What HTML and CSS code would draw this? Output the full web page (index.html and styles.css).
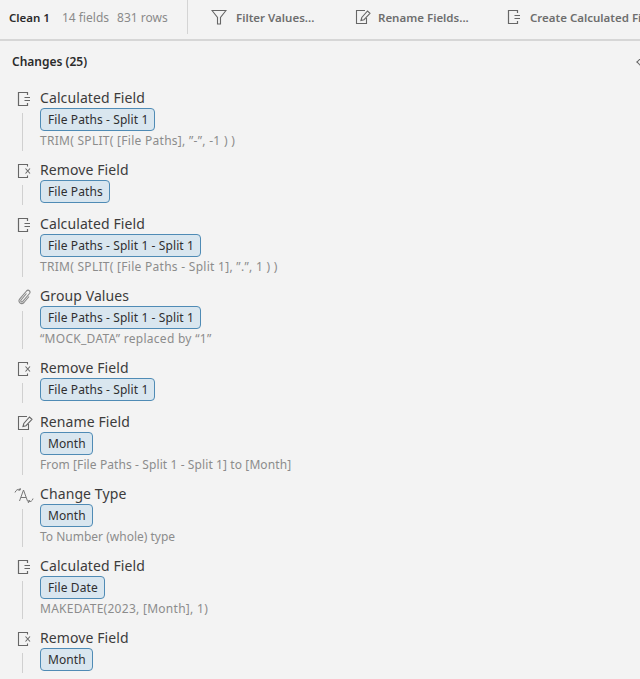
FILE: index.html
```html
<!DOCTYPE html>
<html lang="en">
<head>
    <meta charset="UTF-8">
    <title>Clean 1</title>
    <link rel="stylesheet" href="styles.css">
</head>
<body>

<svg class="defs" width="0" height="0">
    <symbol id="i-calc" viewBox="0 0 16 16"><path d="M10.500 4V1.500H1.500V14.500H10.500V12M7.500 6.500H13M7.500 9.500H13" fill="none" stroke="#666" stroke-width="1.200"/></symbol>
    <symbol id="i-remove" viewBox="0 0 16 16"><path d="M10.500 3.500V1.500H1.500V14.500H10.500V12.500M8.500 5.500L13 10.500M13 5.500L8.500 10.500" fill="none" stroke="#666" stroke-width="1.100"/></symbol>
    <symbol id="i-rename" viewBox="0 0 16 16"><path d="M10 1.500H1.500V14.500H11.500V9M6 11.500L6.800 8.500L12.500 2L15 4.300L9 10.700Z" fill="none" stroke="#666" stroke-width="1.100"/></symbol>
    <symbol id="i-group" viewBox="0 0 16 16"><path d="M9.500 4.500L4 11C3 12.500 4.800 13.500 5.800 12.400L12.500 4.500C14 2.500 11.500 0 9.500 2L2.800 9.800C0.500 12.500 4 16.500 7 13.500L12 7.500" fill="none" stroke="#888" stroke-width="1.100"/></symbol>
    <symbol id="i-type" viewBox="0 0 20 16"><path d="M5.500 14L9.500 3L13.500 14M7 10.500H12M1 5.500C2 3 3.500 2 6 2.500M6 1L6.500 2.800L4.500 3.500M19 11.500C18.500 14 16.500 15 14.500 14.500M14.500 16L14 14L16 13.500" fill="none" stroke="#777" stroke-width="1"/></symbol>
    <symbol id="i-filter" viewBox="0 0 16 16"><path d="M1 1.500H15L9.500 8.500V15H6.500V8.500Z" fill="none" stroke="#666" stroke-width="1.100"/></symbol>
</svg>

<header class="topbar">
    <div class="step-info">
        <span class="step-name">Clean 1</span>
        <span class="step-count">14 fields</span>
        <span class="step-count">831 rows</span>
    </div>
    <div class="actions">
        <span class="action action-filter"><svg class="action-icon"><use href="#i-filter"/></svg>Filter Values...</span>
        <span class="action action-rename"><svg class="action-icon"><use href="#i-rename"/></svg>Rename Fields...</span>
        <span class="action"><svg class="action-icon"><use href="#i-calc"/></svg>Create Calculated Field...</span>
    </div>
</header>

<main class="panel">
    <div class="panel-head">
        <h2>Changes (25)</h2>
        <span class="collapse"></span>
    </div>

    <div class="change">
        <svg class="change-icon"><use href="#i-calc"/></svg>
        <div class="change-title">Calculated Field</div>
        <div class="change-body">
            <span class="pill">File Paths - Split 1</span>
            <div class="desc desc-formula">TRIM( SPLIT( [File Paths], ”-”, -1 ) )</div>
        </div>
    </div>
    <div class="change">
        <svg class="change-icon"><use href="#i-remove"/></svg>
        <div class="change-title">Remove Field</div>
        <div class="change-body">
            <span class="pill">File Paths</span>
        </div>
    </div>
    <div class="change">
        <svg class="change-icon"><use href="#i-calc"/></svg>
        <div class="change-title">Calculated Field</div>
        <div class="change-body">
            <span class="pill">File Paths - Split 1 - Split 1</span>
            <div class="desc desc-formula">TRIM( SPLIT( [File Paths - Split 1], ”.”, 1 ) )</div>
        </div>
    </div>
    <div class="change">
        <svg class="change-icon"><use href="#i-group"/></svg>
        <div class="change-title">Group Values</div>
        <div class="change-body">
            <span class="pill">File Paths - Split 1 - Split 1</span>
            <div class="desc desc-formula">“MOCK_DATA” replaced by “1”</div>
        </div>
    </div>
    <div class="change">
        <svg class="change-icon"><use href="#i-remove"/></svg>
        <div class="change-title">Remove Field</div>
        <div class="change-body">
            <span class="pill">File Paths - Split 1</span>
        </div>
    </div>
    <div class="change">
        <svg class="change-icon"><use href="#i-rename"/></svg>
        <div class="change-title">Rename Field</div>
        <div class="change-body">
            <span class="pill">Month</span>
            <div class="desc">From [File Paths - Split 1 - Split 1] to [Month]</div>
        </div>
    </div>
    <div class="change">
        <svg class="change-icon change-icon-wide"><use href="#i-type"/></svg>
        <div class="change-title">Change Type</div>
        <div class="change-body">
            <span class="pill">Month</span>
            <div class="desc desc-plain">To Number (whole) type</div>
        </div>
    </div>
    <div class="change">
        <svg class="change-icon"><use href="#i-calc"/></svg>
        <div class="change-title">Calculated Field</div>
        <div class="change-body">
            <span class="pill">File Date</span>
            <div class="desc desc-formula">MAKEDATE(2023, [Month], 1)</div>
        </div>
    </div>
    <div class="change">
        <svg class="change-icon"><use href="#i-remove"/></svg>
        <div class="change-title">Remove Field</div>
        <div class="change-body">
            <span class="pill">Month</span>
        </div>
    </div>
</main>

</body>
</html>
```

FILE: styles.css
```css
html, body {
    height: 100%;
}
body {
    margin: 0;
    overflow: hidden;
    background: #f3f3f3;
    color: #333;
    font-family: "Noto Sans", sans-serif;
}
.defs {
    display: block;
    height: 0;
}
.topbar {
    display: flex;
    height: 39px;
    border-bottom: 2px solid #d6d6d6;
    white-space: nowrap;
}
.step-info {
    flex-shrink: 0;
    width: 178px;
    height: 34px;
    padding-left: 9px;
    display: flex;
    align-items: center;
    border-right: 1px solid #d4d4d4;
    font-size: 12px;
}
.step-name {
    font-weight: 600;
    color: #2b2b2b;
    margin-right: 12px;
    font-size: 11.5px;
}
.step-count {
    color: #8a8a8a;
    margin-right: 8px;
}
.actions {
    display: flex;
    align-items: center;
    height: 34px;
    padding-left: 23px;
}
.action {
    display: flex;
    flex-shrink: 0;
    align-items: center;
    font-size: 11.5px;
    font-weight: 600;
    color: #6e6e6e;
}
.action-filter {
    width: 144px;
}
.action-filter .action-icon {
    margin-right: 9px;
}
.action-rename {
    width: 152px;
}
.action-icon {
    width: 16px;
    height: 16px;
    margin-right: 7px;
}
.panel {
    padding: 0 0 0 17px;
}
.panel-head {
    position: relative;
    height: 47px;
    padding-top: 13px;
    box-sizing: border-box;
    margin-left: -5px;
}
.panel-head h2 {
    margin: 0;
    font-size: 12px;
    line-height: 16px;
    font-weight: 600;
    color: #2b2b2b;
}
.collapse {
    position: absolute;
    right: -6px;
    top: 17px;
    width: 7px;
    height: 7px;
    border-left: 1.5px solid #666;
    border-bottom: 1.5px solid #666;
    transform: rotate(45deg);
}
.change {
    position: relative;
    padding-left: 23px;
    margin-bottom: 11px;
}
.change-icon {
    position: absolute;
    left: 0;
    top: 3px;
    width: 16px;
    height: 16px;
}
.change-icon-wide {
    left: -3px;
    width: 20px;
}
.change-title {
    font-size: 14px;
    line-height: 20px;
    letter-spacing: 0.1px;
    color: #3c3c3c;
}
.change-body {
    position: relative;
}
.change-body::before {
    content: "";
    position: absolute;
    left: -18px;
    top: 5px;
    bottom: -2px;
    width: 1px;
    background: #d0d0d0;
}
.pill {
    display: block;
    width: fit-content;
    box-sizing: border-box;
    height: 23px;
    line-height: 21px;
    padding: 0 6px 0 7px;
    border: 1px solid #4f8bb5;
    border-radius: 4px;
    background: #d9e6ef;
    font-size: 12px;
    letter-spacing: 0.1px;
    color: #2f2f2f;
}
.desc {
    margin-top: 1px;
    font-size: 12px;
    line-height: 17px;
    letter-spacing: 0.1px;
    color: #8c8c8c;
}
.desc-formula {
    letter-spacing: 0.28px;
}
.desc-plain {
    letter-spacing: 0;
}
```
